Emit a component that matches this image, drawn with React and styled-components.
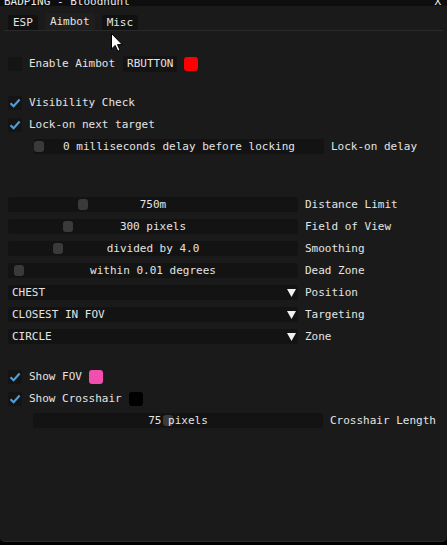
import React from "react";
import styled, { createGlobalStyle } from "styled-components";

const GlobalStyle = createGlobalStyle`
  html, body {
    margin: 0;
    padding: 0;
    background: #000;
  }
  body {
    width: 447px;
    height: 545px;
    overflow: hidden;
    font-family: "DejaVu Sans Mono", "Liberation Mono", monospace;
    font-size: 11px;
    color: #e4e4e4;
  }
`;

const Window = styled.div`
  position: relative;
  width: 447px;
  height: 541px;
  background: #1a1a1a;
  border-bottom: 1px solid #2b2b2b;
  border-radius: 0 0 5px 5px;
  overflow: hidden;
  display: flex;
  flex-direction: column;
`;

const TitleBar = styled.div`
  height: 6px;
  flex: none;
  background: #0e0e0e;
  overflow: hidden;
  display: flex;
  justify-content: space-between;
  padding: 0 6px 0 4px;
`;

const TitleText = styled.span`
  margin-top: -4px;
  line-height: 11px;
  white-space: pre;
  color: #e8e8e8;
`;

const TabBar = styled.div`
  display: flex;
  gap: 7px;
  margin: 8px 4px 0;
  padding-left: 4px;
  border-bottom: 1px solid #2a2a2a;
  height: 16px;
`;

const Tab = styled.div`
  height: ${(p) => (p.$active ? 17 : 15)}px;
  margin-top: ${(p) => (p.$active ? -1 : 1)}px;
  padding: 0 5px;
  line-height: ${(p) => (p.$active ? 17 : 15)}px;
  background: ${(p) => (p.$active ? "#1e1e1e" : "#111111")};
  border-radius: 2px 2px 0 0;
`;

const Content = styled.div`
  display: flex;
  flex-direction: column;
  gap: 7px;
  padding: 25px 8px 0;
`;

const Spacer = styled.div`
  height: ${(p) => p.$h}px;
  margin-top: -7px;
`;

const Row = styled.div`
  display: flex;
  align-items: center;
  height: 15px;
  padding-left: ${(p) => p.$indent || 0}px;
  white-space: pre;
`;

const Box = styled.div`
  width: 14px;
  height: 14px;
  border-radius: 2px;
  background: #141414;
  display: flex;
  align-items: center;
  justify-content: center;
  margin-right: 7px;
  flex: none;
`;

const Label = styled.span`
  line-height: 15px;
`;

const KeyButton = styled.div`
  margin-left: 8px;
  height: 16px;
  line-height: 16px;
  padding: 0 4px;
  background: #131313;
  border-radius: 2px;
`;

const Swatch = styled.div`
  width: 14px;
  height: 14px;
  border-radius: 3px;
  background: ${(p) => p.$color};
  margin-left: ${(p) => p.$gap}px;
  flex: none;
`;

const Frame = styled.div`
  position: relative;
  width: 290px;
  height: 15px;
  background: #131313;
  border-radius: 2px;
  margin-right: 7px;
  flex: none;
  display: flex;
  align-items: center;
`;

const Grab = styled.div`
  position: absolute;
  top: 2px;
  width: 10px;
  height: 11px;
  border-radius: 3px;
  background: #3a3a3a;
`;

const Value = styled.span`
  position: relative;
  flex: 1;
  text-align: center;
  line-height: 15px;
`;

const ComboText = styled.span`
  flex: 1;
  padding-left: 4px;
  line-height: 15px;
`;

const Arrow = styled.svg`
  width: 9px;
  height: 8px;
  margin-right: 2px;
  flex: none;
`;

const Cursor = styled.svg`
  position: absolute;
  left: 111px;
  top: 33px;
  width: 12px;
  height: 19px;
`;

function Check({ on }) {
  return (
    <Box>
      {on && (
        <svg width="12" height="12" viewBox="0 0 12 12">
          <path d="M1.5 6.2 L4.6 9.2 L10.6 2.6" fill="none" stroke="#4f9fd6" strokeWidth="2.2" />
        </svg>
      )}
    </Box>
  );
}

function Checkbox({ on, label, children }) {
  return (
    <Row>
      <Check on={on} />
      <Label>{label}</Label>
      {children}
    </Row>
  );
}

function Slider({ value, label, grab, indent }) {
  return (
    <Row $indent={indent}>
      <Frame>
        <Grab style={{ left: grab }} />
        <Value>{value}</Value>
      </Frame>
      <Label>{label}</Label>
    </Row>
  );
}

function Combo({ value, label }) {
  return (
    <Row>
      <Frame>
        <ComboText>{value}</ComboText>
        <Arrow viewBox="0 0 9 8">
          <path d="M0 0 L9 0 L4.5 8 Z" fill="#f0f0f0" />
        </Arrow>
      </Frame>
      <Label>{label}</Label>
    </Row>
  );
}

export default function App() {
  return (
    <>
      <GlobalStyle />
      <Window>
        <TitleBar>
          <TitleText>BADPING - Bloodhunt</TitleText>
          <TitleText>X</TitleText>
        </TitleBar>
        <TabBar>
          <Tab>ESP</Tab>
          <Tab $active>Aimbot</Tab>
          <Tab>Misc</Tab>
        </TabBar>
        <Content>
          <Checkbox on={false} label="Enable Aimbot">
            <KeyButton>RBUTTON</KeyButton>
            <Swatch $color="#ff0000" $gap={7} />
          </Checkbox>
          <Spacer $h={17} />
          <Checkbox on label="Visibility Check" />
          <Checkbox on label="Lock-on next target" />
          <Slider indent={26} grab={0} value="0 milliseconds delay before locking" label="Lock-on delay" />
          <Spacer $h={36} />
          <Slider grab={70} value="750m" label="Distance Limit" />
          <Slider grab={55} value="300 pixels" label="Field of View" />
          <Slider grab={45} value="divided by 4.0" label="Smoothing" />
          <Slider grab={6} value="within 0.01 degrees" label="Dead Zone" />
          <Combo value="CHEST" label="Position" />
          <Combo value="CLOSEST IN FOV" label="Targeting" />
          <Combo value="CIRCLE" label="Zone" />
          <Spacer $h={18} />
          <Checkbox on label="Show FOV">
            <Swatch $color="#f04fae" $gap={7} />
          </Checkbox>
          <Checkbox on label="Show Crosshair">
            <Swatch $color="#000000" $gap={7} />
          </Checkbox>
          <Slider indent={25} grab={130} value="75 pixels" label="Crosshair Length" />
        </Content>
        <Cursor viewBox="0 0 12 19">
          <path d="M0.5 0.5 L0.5 16 L4.2 12.4 L6.8 18.2 L9 17.2 L6.5 11.6 L11.2 11.6 Z" fill="#fff" stroke="#000" strokeWidth="1" />
        </Cursor>
      </Window>
    </>
  );
}
